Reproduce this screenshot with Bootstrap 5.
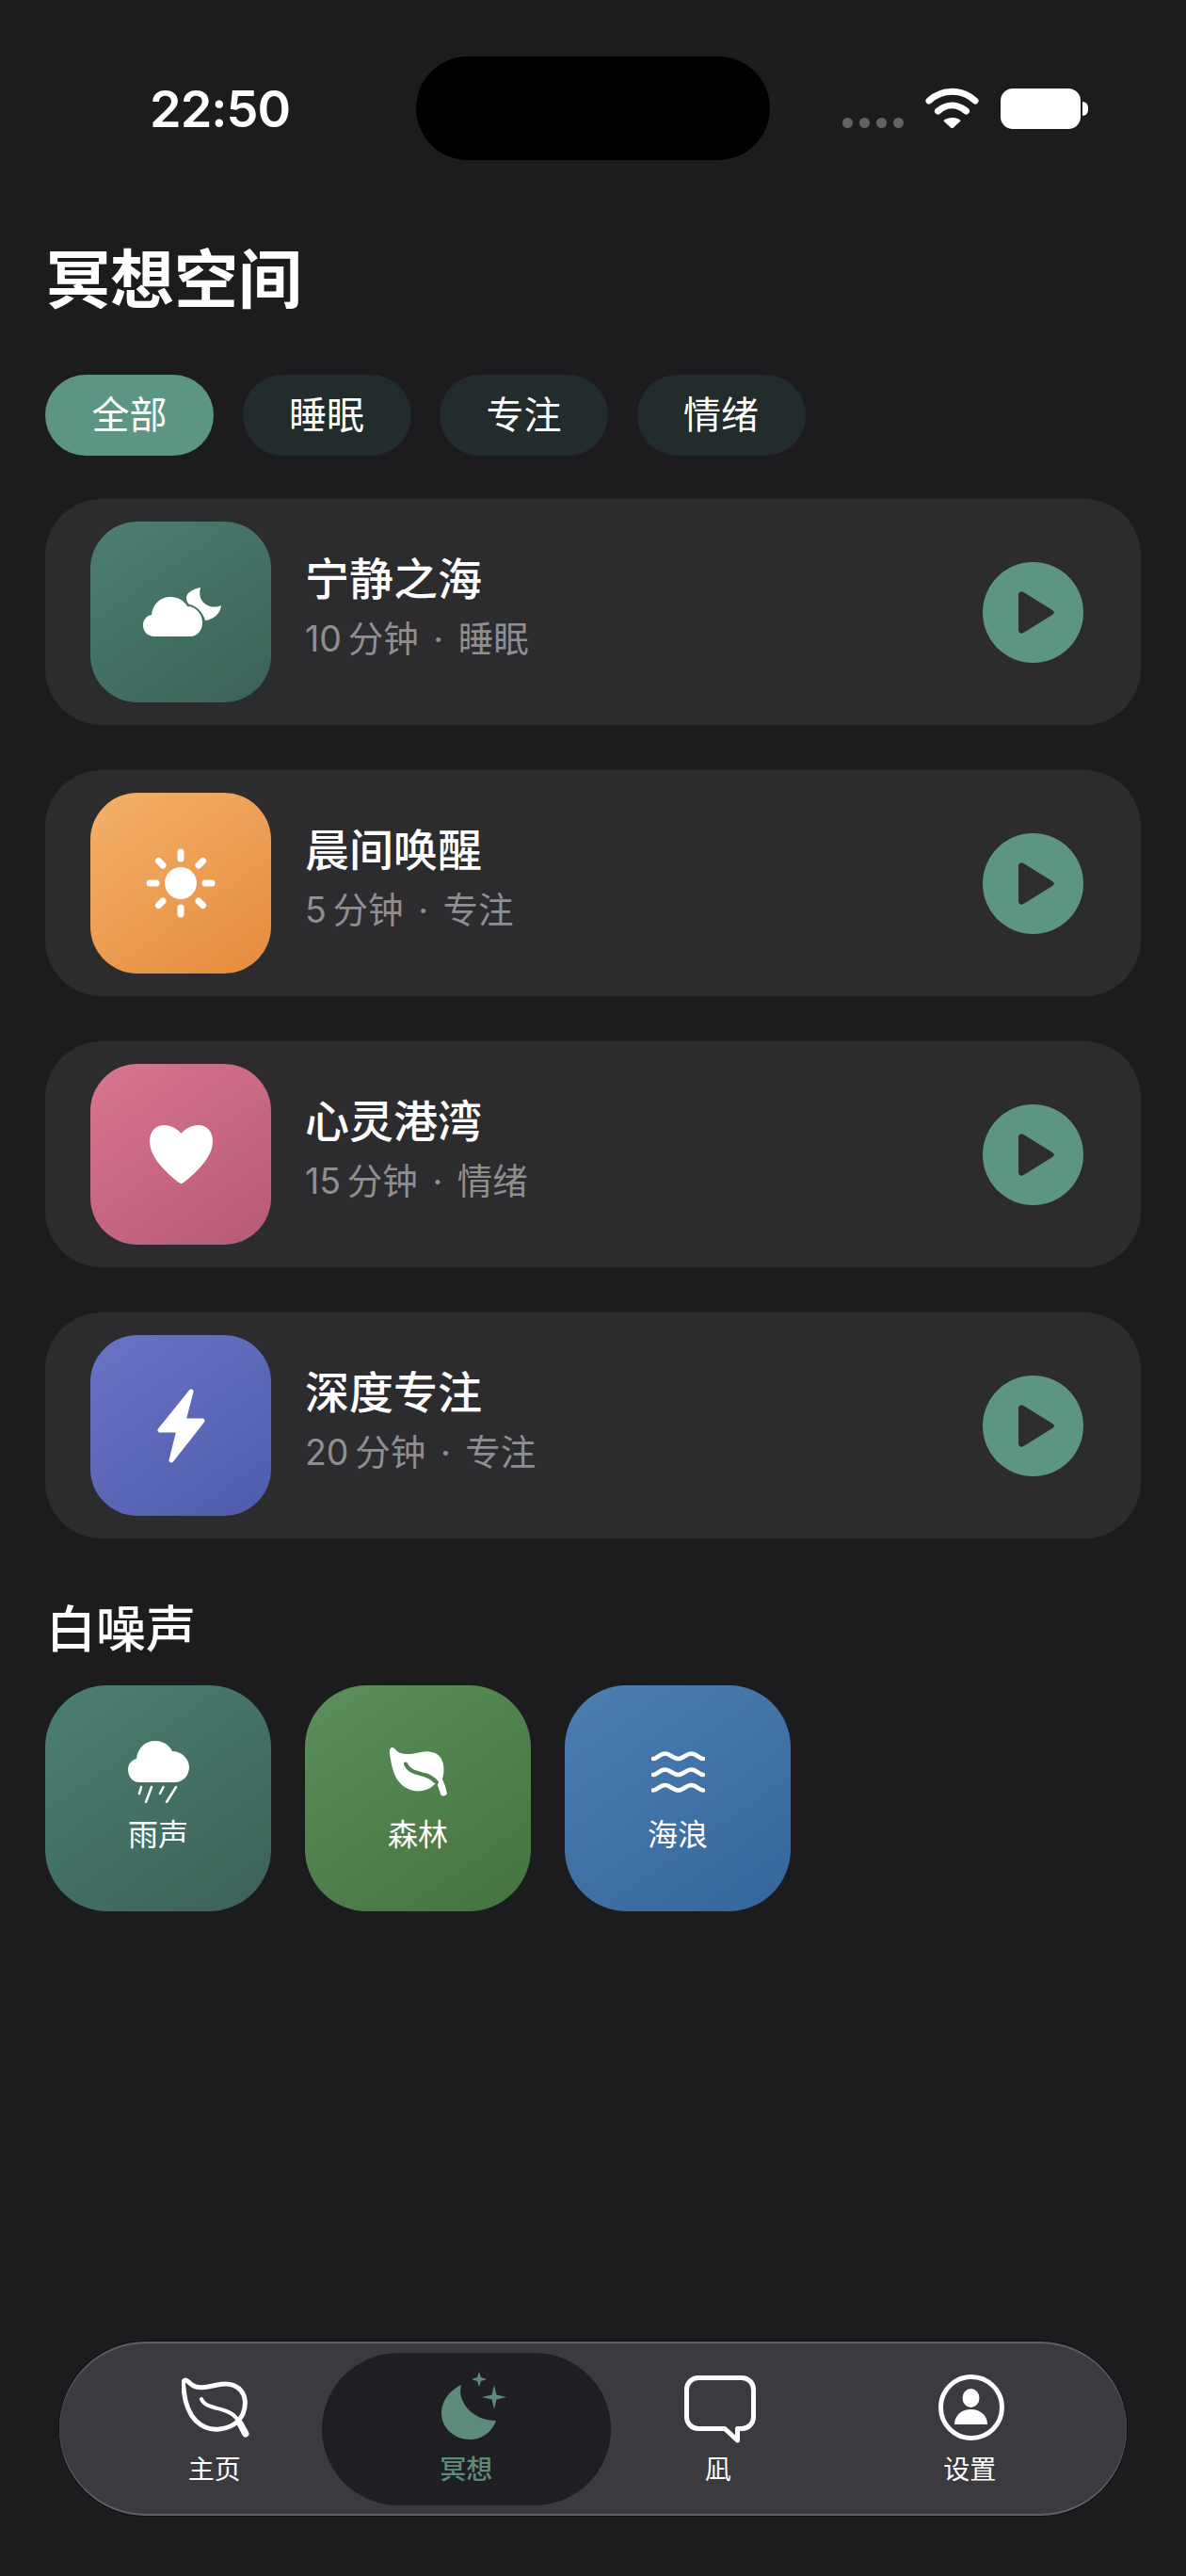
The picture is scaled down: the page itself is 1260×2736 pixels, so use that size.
<!DOCTYPE html>
<html lang="zh-CN">
<head>
    <meta charset="UTF-8">
    <title>冥想空间</title>
    <meta name="viewport" content="width=device-width, initial-scale=1">
    <link href="https://cdn.jsdelivr.net/npm/bootstrap@5.3.0/dist/css/bootstrap.min.css" rel="stylesheet">
    <style>
        body { background: #1c1c1e; color: #fff; font-family: Inter, "Noto Sans CJK SC", sans-serif; }
        .page-wrap { height: 2736px; overflow: hidden; padding: 60px 48px 64px; }

        /* 状态栏 */
        .status-bar { height: 110px; }
        .status-time { width: 394px; padding-left: 111px; font-size: 54px; letter-spacing: -1px; font-weight: 600; line-height: 112px; }
        .status-island { width: 376px; height: 110px; background: #000; border-radius: 55px; }
        .status-right { padding-left: 77px; }
        .status-dots { gap: 7px; margin-top: 30px; margin-right: 23px; }
        .status-dots span { width: 11px; height: 11px; border-radius: 50%; background: #636366; }
        .status-wifi { margin-top: 33px; }
        .battery-body { width: 85px; height: 43px; background: #fff; border-radius: 13px; margin: 34px 0 0 23px; }
        .battery-nub { width: 6px; height: 15px; background: #fff; border-radius: 0 8px 8px 0; margin: 48px 0 0 2px; }

        .page-title { font-size: 68px; font-weight: 700; line-height: 80px; margin: 87px 0 61px 1px; }

        .filter-row { gap: 30.5px; margin-bottom: 46px; }
        .filter-pill { width: 179px; height: 86px; padding: 0; border: 0; font-size: 40px; color: #fff; background: #232c2c; line-height: 86px; }
        .filter-pill.is-on { background: #5c9583; }

        .session-list { gap: 48px; }
        .session-card { height: 240px; padding: 0 61px 0 48px; background: #2c2c2e; border: 0; border-radius: 60px; flex-direction: row; align-items: center; color: #fff; }
        .session-icon { width: 192px; height: 192px; border-radius: 50px; margin-right: 36px; flex: none; }
        .session-text { padding-bottom: 12px; }
        .session-name { font-size: 47px; font-weight: 500; line-height: 64px; }
        .session-meta { font-size: 37.5px; line-height: 54px; color: #8e8e93; margin-top: 5px; }
        .meta-dot { margin: 0 5px; }
        .play-btn { width: 107px; height: 107px; border-radius: 50%; background: #5c9583; flex: none; }
        .cloud-shift { margin-left: 3px; }

        .bg-teal { background: linear-gradient(145deg, #4c7f71, #3b6157); }
        .bg-sun { background: linear-gradient(145deg, #f4b169, #e58b3e); }
        .bg-rose { background: linear-gradient(145deg, #d9758f, #b65a76); }
        .bg-indigo { background: linear-gradient(145deg, #6a74c5, #4e5bab); }
        .bg-forest { background: linear-gradient(145deg, #5b8f5b, #44733f); }
        .bg-ocean { background: linear-gradient(145deg, #4d7eb2, #35669b); }

        .section-title { font-size: 53px; font-weight: 500; line-height: 60px; margin: 67px 0 29px 1px; }
        .noise-row { gap: 36px; }
        .noise-tile { width: 240px; height: 240px; border-radius: 66px; }
        .noise-icon { height: 66px; }
        .noise-label { font-size: 32px; line-height: 44px; margin-top: 12px; }

        /* 底部导航 */
        .tab-bar { width: 1134px; height: 185px; margin: auto 0 0 15px; padding: 0 33px 0 31px; border-radius: 92px; background: #3a3a3f;
            box-shadow: inset 0 2px 1px rgba(255,255,255,.2), inset 0 -2px 1px rgba(255,255,255,.22), 0 0 0 1px rgba(0,0,0,.45); }
        .tab-item { width: 267.5px; height: 100%; }
        .tab-item.is-on::before { content: ""; position: absolute; top: 12px; bottom: 11px; left: -20px; right: -20px; background: #1f1f23; border-radius: 81px; }
        .tab-icon { height: 76px; padding-left: 4px; z-index: 1; }
        .tab-label { font-size: 28px; line-height: 36px; margin-top: 10px; z-index: 1; }
        .tab-item.is-on .tab-label { color: #5c8b7c; font-weight: 500; }
        .moon-shift { margin-left: 14px; margin-bottom: 4px; }
        .chat-shift { margin-top: 5px; }
    </style>
</head>
<body>

<div class="page-wrap d-flex flex-column">

    <!-- 状态栏 -->
    <div class="status-bar d-flex flex-shrink-0">
        <div class="status-time">22:50</div>
        <div class="status-island"></div>
        <div class="status-right d-flex align-items-start">
            <div class="status-dots d-flex align-self-center"><span></span><span></span><span></span><span></span></div>
            <svg class="status-wifi flex-shrink-0" width="57" height="43" viewBox="0 0 57 43">
                <path d="M4 14C18 1 39 1 53 14" fill="none" stroke="#fff" stroke-width="7" stroke-linecap="round"/>
                <path d="M13.5 25C23 17 34 17 43.5 25" fill="none" stroke="#fff" stroke-width="7" stroke-linecap="round"/>
                <path d="M20 34.5C24 31 33 31 37 34.5C37.500 35 37.500 35.500 37 36L29.500 43H27.500L20 36C19.500 35.500 19.500 35 20 34.500Z" fill="#fff"/>
            </svg>
            <div class="battery-body flex-shrink-0"></div>
            <div class="battery-nub flex-shrink-0"></div>
        </div>
    </div>

    <h1 class="page-title">冥想空间</h1>

    <div class="filter-row d-flex">
        <button class="btn filter-pill is-on rounded-pill">全部</button>
        <button class="btn filter-pill rounded-pill">睡眠</button>
        <button class="btn filter-pill rounded-pill">专注</button>
        <button class="btn filter-pill rounded-pill">情绪</button>
    </div>

    <div class="session-list d-flex flex-column">
        <div class="card session-card">
            <div class="session-icon bg-teal d-flex align-items-center justify-content-center">
                <svg class="cloud-shift" width="83" height="54" viewBox="0 0 83 54" fill="#fff">
                    <path d="M12 53C5 53 0 48 0 41C0 35 4 31 9 30C10 19 18 11 29 11C37 11 44 15 47 21C56 21 63 29 63 38C63 47 57 53 50 53Z"/>
                    <path d="M61 1C52 3 46 7 46 12C46 15 47 17 49 19C56 20 63 26 66 36C75 35 82 29 83 20C74 24 64 20 61 12C60 8 60 4 61 1Z"/>
                </svg>
            </div>
            <div class="session-text flex-grow-1">
                <div class="session-name">宁静之海</div>
                <div class="session-meta">10&thinsp;分钟<span class="meta-dot"> · </span>睡眠</div>
            </div>
            <div class="play-btn d-flex align-items-center justify-content-center">
                <svg width="107" height="107" viewBox="0 0 107 107"><path d="M38 35V72C38 75 40.500 77 43.500 75L74 56C76.500 54.500 76.500 52.500 74 51L43.500 32C40.500 30 38 32 38 35Z" fill="#2e2e30"/></svg>
            </div>
        </div>

        <div class="card session-card">
            <div class="session-icon bg-sun d-flex align-items-center justify-content-center">
                <svg width="80" height="80" viewBox="-40 -40 80 80">
                    <circle r="17" fill="#fff"/>
                    <g stroke="#fff" stroke-width="7" stroke-linecap="round">
                        <path d="M0-33V-26M0 33V26M-33 0H-26M33 0H26M-23.500-23.500L-19-19M23.500-23.500L19-19M-23.500 23.500L-19 19M23.500 23.500L19 19"/>
                    </g>
                </svg>
            </div>
            <div class="session-text flex-grow-1">
                <div class="session-name">晨间唤醒</div>
                <div class="session-meta">5&thinsp;分钟<span class="meta-dot"> · </span>专注</div>
            </div>
            <div class="play-btn d-flex align-items-center justify-content-center">
                <svg width="107" height="107" viewBox="0 0 107 107"><path d="M38 35V72C38 75 40.500 77 43.500 75L74 56C76.500 54.500 76.500 52.500 74 51L43.500 32C40.500 30 38 32 38 35Z" fill="#2e2e30"/></svg>
            </div>
        </div>

        <div class="card session-card">
            <div class="session-icon bg-rose d-flex align-items-center justify-content-center">
                <svg width="67" height="63" viewBox="0 0 67 63" fill="#fff">
                    <path d="M33.500 9C29 3.500 22 0 15.500 0C6 0 0 7 0 17C0 34 17 50 31 61C33 62.500 34 62.500 36 61C50 50 67 34 67 17C67 7 61 0 51.500 0C45 0 38 3.500 33.500 9Z"/>
                </svg>
            </div>
            <div class="session-text flex-grow-1">
                <div class="session-name">心灵港湾</div>
                <div class="session-meta">15&thinsp;分钟<span class="meta-dot"> · </span>情绪</div>
            </div>
            <div class="play-btn d-flex align-items-center justify-content-center">
                <svg width="107" height="107" viewBox="0 0 107 107"><path d="M38 35V72C38 75 40.500 77 43.500 75L74 56C76.500 54.500 76.500 52.500 74 51L43.500 32C40.500 30 38 32 38 35Z" fill="#2e2e30"/></svg>
            </div>
        </div>

        <div class="card session-card">
            <div class="session-icon bg-indigo d-flex align-items-center justify-content-center">
                <svg width="51" height="79" viewBox="0 0 51 79">
                    <path d="M36 3L3 44H23L15 76L48 34H28Z" fill="#fff" stroke="#fff" stroke-width="5" stroke-linejoin="round"/>
                </svg>
            </div>
            <div class="session-text flex-grow-1">
                <div class="session-name">深度专注</div>
                <div class="session-meta">20&thinsp;分钟<span class="meta-dot"> · </span>专注</div>
            </div>
            <div class="play-btn d-flex align-items-center justify-content-center">
                <svg width="107" height="107" viewBox="0 0 107 107"><path d="M38 35V72C38 75 40.500 77 43.500 75L74 56C76.500 54.500 76.500 52.500 74 51L43.500 32C40.500 30 38 32 38 35Z" fill="#2e2e30"/></svg>
            </div>
        </div>
    </div>

    <h2 class="section-title">白噪声</h2>

    <div class="noise-row d-flex">
        <div class="noise-tile bg-teal d-flex flex-column align-items-center justify-content-center">
            <div class="noise-icon d-flex align-items-center">
                <svg width="65" height="66" viewBox="0 0 65 66">
                    <path d="M12 44C5 44 0 38 0 30C0 25 3 21 9 19C10 8 18 0 29 0C38 0 44 5 47 11C57 11 65 19 65 28C65 37 58 44 50 44Z" fill="#fff"/>
                    <path d="M14 49L12 56M37.500 49L34 56M25 49L19 65M51 49L41 65" stroke="#fff" stroke-width="2.500" stroke-linecap="round"/>
                </svg>
            </div>
            <div class="noise-label">雨声</div>
        </div>
        <div class="noise-tile bg-forest d-flex flex-column align-items-center justify-content-center">
            <div class="noise-icon d-flex align-items-center">
                <svg width="63" height="54" viewBox="0 0 74 64">
                    <path d="M4 1C1 2 0 5 1 10C3 24 6 38 14 46C20 53 30 57 40 56C49 55 56 50 60 45L65 60C66 63 72 63 73 59C72 53 70 47 67 41C70 33 70 22 65 14C60 7 50 5 40 7C30 9 18 12 10 6C8 4 6 1 4 1Z" fill="#fff"/>
                    <path d="M21 22C25 32 36 33 46 36C52 38 56 41 60 45" fill="none" stroke="#52824f" stroke-width="5" stroke-linecap="round"/>
                </svg>
            </div>
            <div class="noise-label">森林</div>
        </div>
        <div class="noise-tile bg-ocean d-flex flex-column align-items-center justify-content-center">
            <div class="noise-icon d-flex align-items-center">
                <svg width="57" height="44" viewBox="0 0 57 44" fill="none" stroke="#fff" stroke-width="4.500" stroke-linecap="round">
                    <path d="M2 8C6 8 9 2.500 14.500 2.500C20 2.500 23 8 28.500 8C34 8 37 2.500 42.500 2.500C48 2.500 51 8 55 8"/>
                    <path d="M2 25C6 25 9 19.500 14.500 19.500C20 19.500 23 25 28.500 25C34 25 37 19.500 42.500 19.500C48 19.500 51 25 55 25"/>
                    <path d="M2 41.500C6 41.500 9 36 14.500 36C20 36 23 41.500 28.500 41.500C34 41.500 37 36 42.500 36C48 36 51 41.500 55 41.500"/>
                </svg>
            </div>
            <div class="noise-label">海浪</div>
        </div>
    </div>

    <!-- 底部导航 -->
    <nav class="tab-bar d-flex flex-shrink-0">
        <div class="tab-item d-flex flex-column align-items-center justify-content-center position-relative">
            <div class="tab-icon d-flex align-items-center position-relative">
                <svg width="74" height="64" viewBox="0 0 74 64" fill="none" stroke="#fff" stroke-width="5" stroke-linecap="round" stroke-linejoin="round">
                    <path d="M4 3C2 3 1 6 2 11C3 24 7 38 15 46C22 53 31 56 40 55C50 54 60 49 65 39C69 29 68 19 62 13C56 7 47 6 38 8C28 10 18 13 11 8C8 6 6 3 4 3Z"/>
                    <path d="M21 23C24 31 36 32 45 35C52 37 57 41 60 46L66 60" stroke-width="4"/>
                    <path d="M62 49L68 60" stroke-width="7"/>
                </svg>
            </div>
            <div class="tab-label">主页</div>
        </div>
        <div class="tab-item is-on d-flex flex-column align-items-center justify-content-center position-relative">
            <div class="tab-icon d-flex align-items-center position-relative">
                <svg class="moon-shift" width="70" height="72" viewBox="0 0 70 72" fill="#5c8b7c">
                    <path d="M21 14C8 20 0 32 0 44C0 60 14 72 30 72C43 72 54 64 58 52C45 52 30 46 23 32C19 24 20 18 21 14Z"/>
                    <path d="M40 0L42 6L48 8L42 10L40 16L38 10L32 8L38 6Z"/>
                    <path d="M56 14L58.500 24.500L69 27L58.500 29.500L56 40L53.500 29.500L43 27L53.500 24.500Z"/>
                </svg>
            </div>
            <div class="tab-label">冥想</div>
        </div>
        <div class="tab-item d-flex flex-column align-items-center justify-content-center position-relative">
            <div class="tab-icon d-flex align-items-center position-relative">
                <svg class="chat-shift" width="76" height="72" viewBox="0 0 76 72" fill="none" stroke="#fff" stroke-width="5" stroke-linejoin="round">
                    <path d="M15 2.500H61C68 2.500 73.500 8 73.500 15V44C73.500 51 68 56.500 61 56.500H56.500V69L43 56.500H15C8 56.500 2.500 51 2.500 44V15C2.500 8 8 2.500 15 2.500Z"/>
                </svg>
            </div>
            <div class="tab-label">凪</div>
        </div>
        <div class="tab-item d-flex flex-column align-items-center justify-content-center position-relative">
            <div class="tab-icon d-flex align-items-center position-relative">
                <svg width="70" height="70" viewBox="0 0 70 70">
                    <circle cx="35" cy="35" r="32.500" fill="none" stroke="#fff" stroke-width="5"/>
                    <ellipse cx="34.500" cy="25" rx="9" ry="10" fill="#fff"/>
                    <path d="M17 53C17 43 25 37 34.500 37C44 37 52 43 52 53Z" fill="#fff"/>
                </svg>
            </div>
            <div class="tab-label">设置</div>
        </div>
    </nav>
</div>

<script src="https://cdn.jsdelivr.net/npm/bootstrap@5.3.0/dist/js/bootstrap.bundle.min.js"></script>
</body>
</html>
